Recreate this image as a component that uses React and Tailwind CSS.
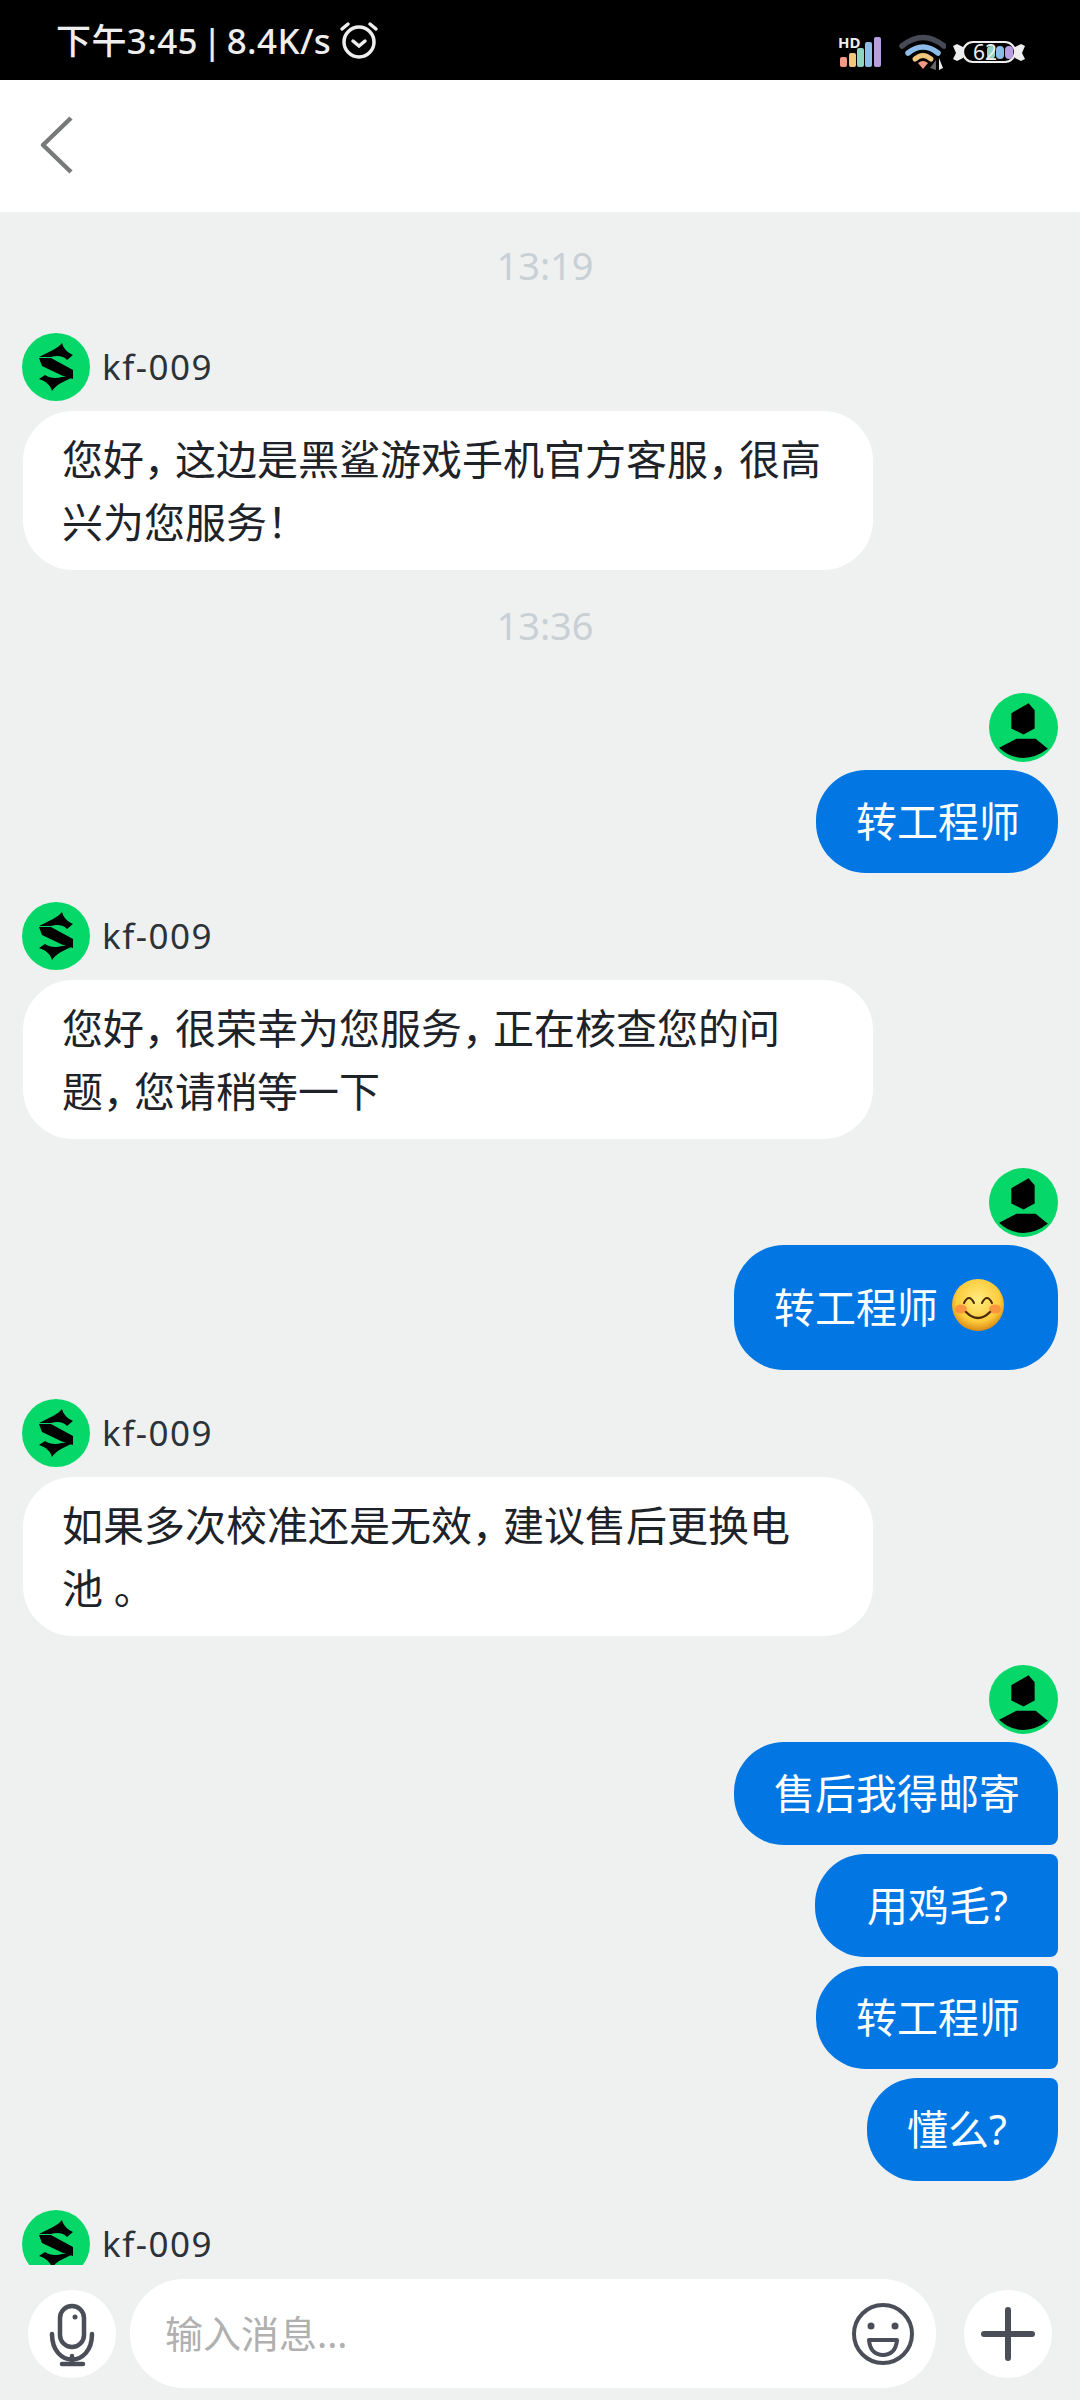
import React from "react";

const cjk = "font-['Noto_Sans','Noto_Sans_CJK_SC',sans-serif]";

const Comma = () => <span className="tracking-[-10px]">，</span>;

const SharkAvatar = () => (
  <svg width="68" height="68" viewBox="0 0 68 68" className="shrink-0">
    <circle cx="34" cy="34" r="34" fill="#05d868" />
    <path d="M17 24 L31 17 C34 15 38 13 40 10 C41 15 46 20 51 22 L45 27 C42 23 35 22 29 24 Z" fill="#000" />
    <path d="M17 25 L29 25 L51 37 L51 46 L41 43 L20 33 Z" fill="#000" />
    <path d="M51 44 L39 50 C35 52 32 55 30 58 C29 53 24 48 17 46 L23 42 C27 45 34 46 40 44 Z" fill="#000" />
  </svg>
);

const UserAvatar = () => (
  <svg width="69" height="69" viewBox="0 0 68 68" className="shrink-0 -mb-px">
    <circle cx="34" cy="34" r="34" fill="#05d868" />
    <path d="M39 10 L45 17 L45 35 L34 41 L22 35 L22 20 Z" fill="#000" />
    <path d="M27 45 H46 L58 55 Q46 64 34 64 Q20 64 10 54 Z" fill="#000" />
  </svg>
);

const Smile = () => (
  <svg width="52" height="52" viewBox="0 0 52 52" className="shrink-0 -mt-[6px]">
    <defs>
      <radialGradient id="face" cx="50%" cy="40%" r="60%">
        <stop offset="0%" stopColor="#ffec80" />
        <stop offset="70%" stopColor="#fdcb3c" />
        <stop offset="100%" stopColor="#d98a14" />
      </radialGradient>
    </defs>
    <circle cx="26" cy="26" r="26" fill="url(#face)" />
    <ellipse cx="9" cy="30" rx="6" ry="4.5" fill="#f8883f" opacity="0.8" />
    <ellipse cx="43" cy="30" rx="6" ry="4.5" fill="#f8883f" opacity="0.8" />
    <path d="M12 24 Q17 14 22 24 M30 24 Q35 14 40 24" stroke="#4a2a0c" strokeWidth="2" fill="none" strokeLinecap="round" />
    <path d="M14 33 Q26 45 38 33" stroke="#4a2a0c" strokeWidth="2.4" fill="none" strokeLinecap="round" />
  </svg>
);

const TimeLabel = ({ children }) => (
  <div className="h-[52px] mb-[42px] pl-[10px] flex items-center justify-center text-[38px] text-[#c9d0d5]">{children}</div>
);

const AgentName = () => (
  <div className="flex items-center gap-[12px] h-[68px]">
    <SharkAvatar />
    <span className="text-[35px] leading-none tracking-[1.5px] text-[#2b3238] -mt-[2px]">kf-009</span>
  </div>
);

const AgentMsg = ({ first, second }) => (
  <div className="mb-[29px]">
    <AgentName />
    <div className="mt-[10px] ml-px w-[850px] h-[159px] rounded-[50px] bg-white flex items-center pl-[39px] text-[41px] leading-[63px] text-[#1d2328] whitespace-nowrap">
      <div>
        {first}
        <br />
        {second}
      </div>
    </div>
  </div>
);

// corner classes differ depending on where the bubble sits in a group
const UserBubble = ({ children, corners, className }) => (
  <div className={`h-[103px] rounded-l-[50px] bg-[#0277e4] text-white text-[41px] flex items-center whitespace-nowrap ${corners} ${className}`}>
    {children}
  </div>
);

export default function App() {
  return (
    <div className={`w-[1080px] h-[2400px] flex flex-col bg-[#eff1f1] overflow-hidden ${cjk}`}>
      {/* status bar */}
      <div className="h-[80px] bg-black flex items-center justify-between pl-[56px] relative">
        <div className="flex items-center text-[#eeeeee] text-[35px] tracking-[0.4px] [word-spacing:-5px] font-medium pt-[2px]">
          <span>下午3:45 | 8.4K/s</span>
          <svg width="40" height="40" viewBox="0 0 40 40" className="ml-[8px] -mt-[2px]">
            <circle cx="20" cy="22" r="15" fill="none" stroke="#eee" strokeWidth="3.5" />
            <path d="M14 21 L20 26 L26 21" fill="none" stroke="#eee" strokeWidth="3.5" strokeLinecap="round" />
            <path d="M3 9 L9 4 M37 9 L31 4" stroke="#eee" strokeWidth="3.5" strokeLinecap="round" />
          </svg>
        </div>
        <div className="absolute left-[838px] top-[28px]">
          <svg width="50" height="42" viewBox="0 0 50 42">
            <rect x="2" y="29" width="7" height="10" rx="2" fill="#f39a84" />
            <rect x="11" y="25" width="7" height="14" rx="2" fill="#f2c77c" />
            <rect x="19" y="20" width="7" height="19" rx="2" fill="#8fd4c0" />
            <rect x="27" y="14" width="7" height="25" rx="2" fill="#8cbce8" />
            <rect x="36" y="9" width="7" height="30" rx="2" fill="#b89ee0" />
            <text x="0" y="20" fontSize="15" fontWeight="700" fill="#eee">HD</text>
          </svg>
        </div>
        <div className="absolute left-[898px] top-[34px]">
          <svg width="48" height="38" viewBox="0 0 48 38">
            <path d="M4 12 Q25 -5 46 12" fill="none" stroke="#454a55" strokeWidth="5.5" strokeLinecap="round" />
            <path d="M10 19 Q25 7 40 19" fill="none" stroke="#8cbce8" strokeWidth="5.5" strokeLinecap="round" />
            <path d="M17 25 Q25 18 33 25" fill="none" stroke="#f2c77c" strokeWidth="5" strokeLinecap="round" />
            <path d="M20 29 Q25 25 30 29 L25 35 Z" fill="#f39a84" />
            <path d="M41 24 L41 36 L45 34 Z" fill="#eee" />
            <path d="M38 26 L38 36 L32 34 Z" fill="#666" />
          </svg>
        </div>
        <div className="absolute left-[952px] top-[32px]">
          <svg width="74" height="36" viewBox="0 0 74 36">
            <path d="M1 14 L5 12 L11 15 L11 26 L5 29 L1 27 L4 21 Z M73 14 L69 12 L63 15 L63 26 L69 29 L73 27 L70 21 Z" fill="#eee" />
            <rect x="11" y="10" width="52" height="20" rx="10" fill="#000" stroke="#eee" strokeWidth="2.2" />
            <rect x="35" y="14" width="8" height="13" rx="4" fill="#8fd4c0" />
            <rect x="44" y="14" width="8" height="13" rx="4" fill="#8cbce8" />
            <rect x="53" y="14" width="8" height="13" rx="4" fill="#b89ee0" />
            <text x="21" y="28" fontSize="21" fill="#eee">62</text>
          </svg>
        </div>
      </div>

      {/* header */}
      <div className="h-[132px] bg-white flex items-center">
        <svg width="80" height="132" viewBox="0 0 80 132">
          <path d="M71 38 L43 65 L71 92" fill="none" stroke="#777a78" strokeWidth="4.5" strokeLinejoin="round" />
        </svg>
      </div>

      {/* messages */}
      <div className="flex-1 overflow-hidden pt-[27px] px-[22px]">
        <TimeLabel>13:19</TimeLabel>
        <AgentMsg
          first={<>您好<Comma />这边是黑鲨游戏手机官方客服<Comma />很高</>}
          second="兴为您服务！"
        />
        <TimeLabel>13:36</TimeLabel>

        <div className="mb-[29px] flex flex-col items-end">
          <UserAvatar />
          <UserBubble corners="rounded-r-[50px]" className="mt-[9px] pl-[40px] pr-[38px]">转工程师</UserBubble>
        </div>

        <AgentMsg
          first={<>您好<Comma />很荣幸为您服务<Comma />正在核查您的问</>}
          second={<>题<Comma />您请稍等一下</>}
        />

        <div className="mb-[29px] flex flex-col items-end">
          <UserAvatar />
          <UserBubble corners="rounded-r-[50px]" className="mt-[9px] !h-[125px] w-[324px] pl-[40px] gap-[14px]">
            <span>转工程师</span>
            <Smile />
          </UserBubble>
        </div>

        <AgentMsg
          first={<>如果多次校准还是无效<Comma />建议售后更换电</>}
          second="池 。"
        />

        <div className="mb-[29px] flex flex-col items-end gap-[9px]">
          <UserAvatar />
          <UserBubble corners="rounded-tr-[50px] rounded-br-[8px]" className="pl-[40px] pr-[38px]">售后我得邮寄</UserBubble>
          <UserBubble corners="rounded-r-[8px]" className="w-[243px] pl-[52px]">用鸡毛?</UserBubble>
          <UserBubble corners="rounded-r-[8px]" className="pl-[40px] pr-[38px]">转工程师</UserBubble>
          <UserBubble corners="rounded-tr-[8px] rounded-br-[50px]" className="w-[191px] pl-[40px]">懂么?</UserBubble>
        </div>

        <AgentName />
      </div>

      {/* input bar */}
      <div className="h-[135px] flex items-center pl-[28px] pt-[2px]">
        <div className="w-[88px] h-[88px] rounded-full bg-white flex items-center justify-center shrink-0">
          <svg width="88" height="88" viewBox="0 0 88 88" fill="none" stroke="#4a4e59" strokeWidth="4.5" strokeLinecap="round">
            <rect x="32" y="16" width="24" height="41" rx="12" />
            <circle cx="47" cy="27" r="2.5" fill="#4a4e59" stroke="none" />
            <path d="M24 44 C24 78 64 78 64 44" />
            <path d="M44 66 V72 M34 74 H55" />
          </svg>
        </div>
        <div className="ml-[14px] w-[806px] h-[109px] rounded-[54px] bg-white flex items-center justify-between pl-[35px] pr-[21px] shrink-0">
          <span className="text-[38px] text-[#b0b0b0]">输入消息...</span>
          <svg width="64" height="64" viewBox="0 0 64 64" fill="none" stroke="#4a4e59" strokeWidth="4">
            <circle cx="32" cy="32" r="29" />
            <circle cx="20" cy="24" r="3.5" fill="#4a4e59" stroke="none" />
            <circle cx="44" cy="24" r="3.5" fill="#4a4e59" stroke="none" />
            <path d="M18 38 H46 C45 50 38 53 32 53 C26 53 19 50 18 38 Z" strokeLinejoin="round" />
          </svg>
        </div>
        <div className="ml-[28px] w-[88px] h-[88px] rounded-full bg-white flex items-center justify-center shrink-0">
          <svg width="56" height="56" viewBox="0 0 56 56" stroke="#4a4e59" strokeWidth="6" strokeLinecap="round">
            <path d="M28 4 V52 M4 28 H52" />
          </svg>
        </div>
      </div>
    </div>
  );
}
